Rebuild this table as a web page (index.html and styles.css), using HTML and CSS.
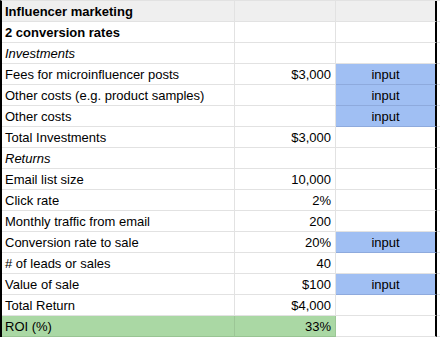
FILE: index.html
```html
<!DOCTYPE html>
<html>
<head>
<meta charset="utf-8">
<link rel="stylesheet" href="styles.css">
</head>
<body>
<div class="sheet">
  <div class="row head"><div class="c a b">Influencer marketing</div><div class="c n"></div><div class="c i"></div><div class="c x"></div></div>
  <div class="row"><div class="c a b">2 conversion rates</div><div class="c n"></div><div class="c i"></div><div class="c x"></div></div>
  <div class="row"><div class="c a it">Investments</div><div class="c n"></div><div class="c i"></div><div class="c x"></div></div>
  <div class="row"><div class="c a">Fees for microinfluencer posts</div><div class="c n">$3,000</div><div class="c i blue">input</div><div class="c x"></div></div>
  <div class="row"><div class="c a">Other costs (e.g. product samples)</div><div class="c n"></div><div class="c i blue">input</div><div class="c x"></div></div>
  <div class="row"><div class="c a">Other costs</div><div class="c n"></div><div class="c i blue">input</div><div class="c x"></div></div>
  <div class="row"><div class="c a">Total Investments</div><div class="c n">$3,000</div><div class="c i"></div><div class="c x"></div></div>
  <div class="row"><div class="c a it">Returns</div><div class="c n"></div><div class="c i"></div><div class="c x"></div></div>
  <div class="row"><div class="c a">Email list size</div><div class="c n">10,000</div><div class="c i"></div><div class="c x"></div></div>
  <div class="row"><div class="c a">Click rate</div><div class="c n">2%</div><div class="c i"></div><div class="c x"></div></div>
  <div class="row"><div class="c a">Monthly traffic from email</div><div class="c n">200</div><div class="c i"></div><div class="c x"></div></div>
  <div class="row"><div class="c a">Conversion rate to sale</div><div class="c n">20%</div><div class="c i blue">input</div><div class="c x"></div></div>
  <div class="row"><div class="c a"># of leads or sales</div><div class="c n">40</div><div class="c i"></div><div class="c x"></div></div>
  <div class="row"><div class="c a">Value of sale</div><div class="c n">$100</div><div class="c i blue">input</div><div class="c x"></div></div>
  <div class="row"><div class="c a">Total Return</div><div class="c n">$4,000</div><div class="c i"></div><div class="c x"></div></div>
  <div class="row"><div class="c a green">ROI (%)</div><div class="c n green">33%</div><div class="c i"></div><div class="c x"></div></div>
</div>
</body>
</html>
```
FILE: styles.css
```css
html, body {
  margin: 0;
  padding: 0;
  background: #fff;
}
body {
  font-family: "Liberation Sans", Arial, sans-serif;
  font-size: 13px;
  color: #000;
}
.sheet {
  width: 438px;
  border-left: 2px solid #000;
  border-top: 1px solid #e2e2e2;
}
.row {
  display: grid;
  grid-template-columns: 233px 101px 101px 3px;
  height: 21px;
}
.c {
  box-sizing: border-box;
  height: 21px;
  border-bottom: 1px solid #e2e2e2;
  border-right: 1px solid #e2e2e2;
  padding: 2px 3px 1px 3px;
  line-height: 17px;
  white-space: nowrap;
  overflow: hidden;
}
.a { text-align: left; }
.n { text-align: right; padding-right: 4px; }
.i {
  text-align: center;
  border-right: 2px solid #000;
}
.x {
  border-right: none;
  padding: 0;
}
.head .c { background: #efefef; }
.head .x { background: #fff; }
.b { font-weight: bold; }
.it { font-style: italic; }
.blue {
  background: #a0bff3;
  border-bottom-color: #8eaadd;
}
.green {
  background: #aad8a4;
  border-bottom-color: #98c492;
  border-right-color: #9cc696;
}
```
